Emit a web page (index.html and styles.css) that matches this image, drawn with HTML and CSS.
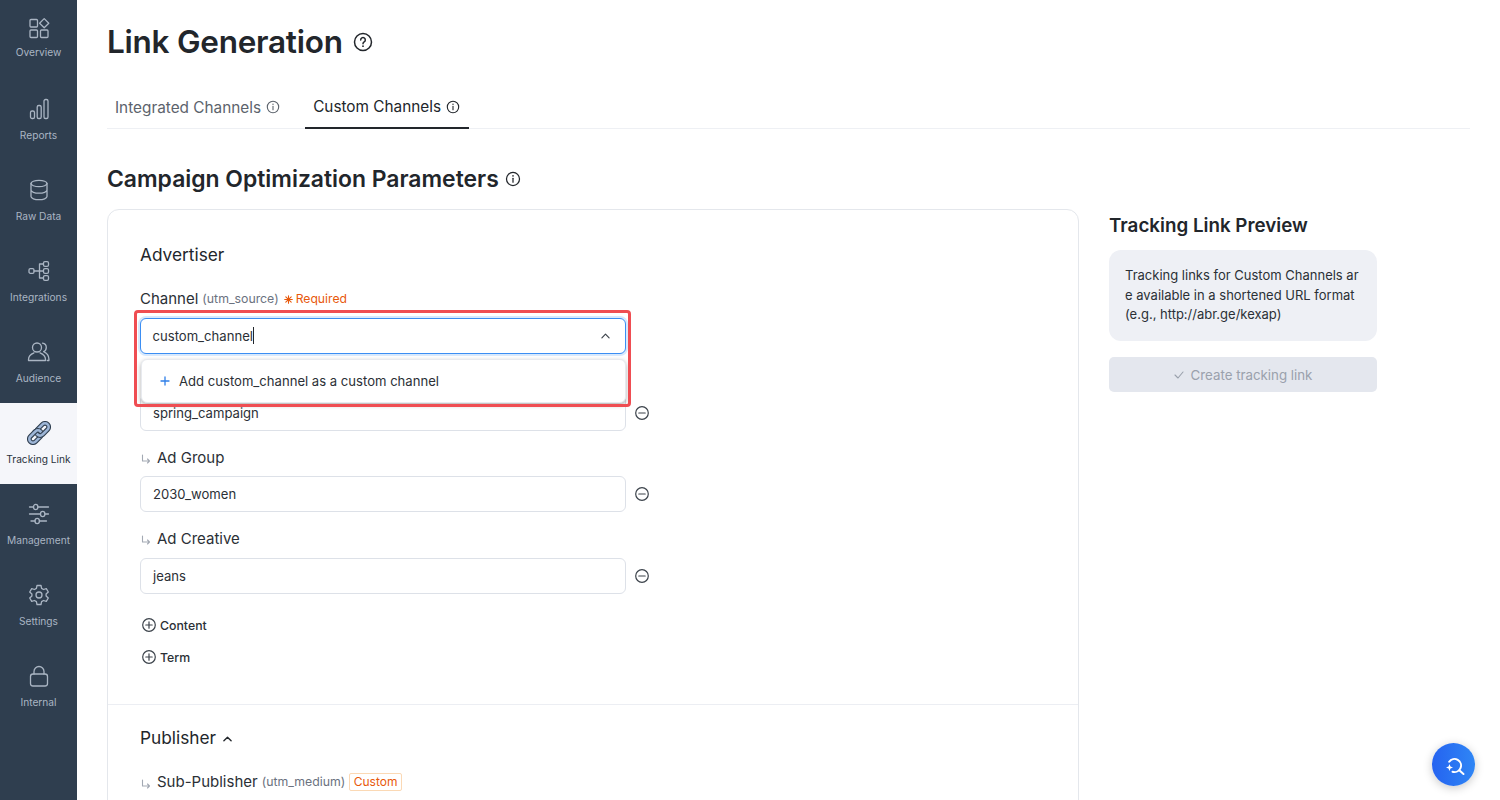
FILE: index.html
```html
<!DOCTYPE html>
<html lang="en">
<head>
<meta charset="utf-8">
<title>Link Generation</title>
<link rel="stylesheet" href="styles.css">
</head>
<body>
<div class="app">
  <nav class="sidebar">
    <a class="nav-item nav-item-first">
      <svg class="nav-icon" viewBox="0 0 24 24"><rect x="3" y="3.500" width="7.500" height="7.500" rx="1"/><rect x="3" y="14" width="7.500" height="7.500" rx="1"/><rect x="13.500" y="14" width="7.500" height="7.500" rx="1"/><path d="M17.200 2.600l4.600 4.600-4.600 4.600-4.600-4.600z"/></svg>
      <span>Overview</span>
    </a>
    <a class="nav-item">
      <svg class="nav-icon" viewBox="0 0 24 24"><rect x="3.500" y="14" width="4" height="7.500" rx="1.600"/><rect x="10.200" y="8.500" width="4" height="13" rx="1.600"/><rect x="17" y="2.500" width="4" height="19" rx="1.600"/></svg>
      <span>Reports</span>
    </a>
    <a class="nav-item">
      <svg class="nav-icon" viewBox="0 0 24 24"><ellipse cx="12" cy="5.500" rx="8" ry="3.200"/><path d="M4 5.500v13c0 1.800 3.600 3.200 8 3.200s8-1.400 8-3.200v-13M4 12c0 1.800 3.600 3.200 8 3.200s8-1.400 8-3.200"/></svg>
      <span>Raw Data</span>
    </a>
    <a class="nav-item">
      <svg class="nav-icon" viewBox="0 0 24 24"><rect x="2" y="9.700" width="5" height="4.600" rx="1.400"/><rect x="16.500" y="2.700" width="5" height="4.600" rx="1.400"/><rect x="16.500" y="9.700" width="5" height="4.600" rx="1.400"/><rect x="16.500" y="16.700" width="5" height="4.600" rx="1.400"/><path d="M7 12h9.500M12.500 5h4M12.500 19h4M12.500 5v14"/></svg>
      <span>Integrations</span>
    </a>
    <a class="nav-item">
      <svg class="nav-icon" viewBox="0 0 24 24"><circle cx="10" cy="7.500" r="4.500"/><path d="M7 12.800c-1.700.7-5.500 2.900-5.500 6.700v1h17v-1c0-3.800-3.800-6-5.500-6.700M15.500 3.200c2.300.4 3.800 2.200 3.800 4.300 0 1.800-1 3.400-2.700 4.100 2.700 1.100 5.300 3.500 5.300 7.500v1.400h-1.600"/></svg>
      <span>Audience</span>
    </a>
    <a class="nav-item nav-item-active">
      <svg class="nav-icon" viewBox="0 0 24 24">
        <defs><clipPath id="link-over"><rect x="8" y="0" width="8" height="12"/></clipPath></defs>
        <g transform="rotate(-45 12 12)">
          <path fill-rule="evenodd" d="M3.500 6.500h7a5.500 5.500 0 0 1 0 11h-7a5.500 5.500 0 0 1 0-11zM3.500 10.200a1.800 1.800 0 0 0 0 3.600h7a1.800 1.800 0 0 0 0-3.600z"/>
          <path fill-rule="evenodd" d="M13.500 6.500h7a5.500 5.500 0 0 1 0 11h-7a5.500 5.500 0 0 1 0-11zM13.500 10.200a1.800 1.800 0 0 0 0 3.600h7a1.800 1.800 0 0 0 0-3.600z"/>
          <path clip-path="url(#link-over)" fill-rule="evenodd" d="M3.500 6.500h7a5.500 5.500 0 0 1 0 11h-7a5.500 5.500 0 0 1 0-11zM3.500 10.200a1.800 1.800 0 0 0 0 3.600h7a1.800 1.800 0 0 0 0-3.600z"/>
        </g>
      </svg>
      <span>Tracking Link</span>
    </a>
    <a class="nav-item">
      <svg class="nav-icon" viewBox="0 0 24 24"><path d="M2.500 5h4M11 5h10.500M2.500 12h11M18 12h3.500M4 19h4M12.500 19h7"/><ellipse cx="8.700" cy="5" rx="2.200" ry="2.600"/><ellipse cx="15.700" cy="12" rx="2.200" ry="2.600"/><ellipse cx="10.200" cy="19" rx="2.200" ry="2.600"/></svg>
      <span>Management</span>
    </a>
    <a class="nav-item">
      <svg class="nav-icon" viewBox="0 0 24 24"><circle cx="12" cy="12" r="3"/><path d="M10 2.500h4l.6 2.900 1.900 1.100 2.800-.9 2 3.400-2.200 2v2l2.200 2-2 3.400-2.800-.9-1.900 1.100-.6 2.900h-4l-.6-2.900-1.900-1.100-2.800.9-2-3.400 2.200-2v-2l-2.200-2 2-3.400 2.800.9 1.900-1.100z"/></svg>
      <span>Settings</span>
    </a>
    <a class="nav-item">
      <svg class="nav-icon" viewBox="0 0 24 24"><rect x="3.500" y="10" width="17" height="12" rx="2.500"/><path d="M7 10V7.500a5 5 0 0 1 10 0V10"/></svg>
      <span>Internal</span>
    </a>
  </nav>

  <main class="main">
    <header class="page-head">
      <h1 class="page-title">Link Generation</h1>
      <svg class="help-icon" viewBox="0 0 20 20"><circle cx="10" cy="10" r="8.500"/><path d="M7.700 7.900a2.300 2.300 0 1 1 3.500 2c-.8.500-1.200.9-1.200 1.800"/><circle class="dot" cx="10" cy="14.200" r=".9"/></svg>
    </header>

    <div class="tabs">
      <div class="tab">Integrated Channels
        <svg class="info-icon" viewBox="0 0 14 14"><circle cx="7" cy="7" r="5.700"/><path d="M7 6.400v3.400"/><circle class="dot" cx="7" cy="4.300" r=".7"/></svg>
      </div>
      <div class="tab tab-active">Custom Channels
        <svg class="info-icon" viewBox="0 0 14 14"><circle cx="7" cy="7" r="5.700"/><path d="M7 6.400v3.400"/><circle class="dot" cx="7" cy="4.300" r=".7"/></svg>
      </div>
    </div>

    <div class="section-head">
      <h2 class="section-title">Campaign Optimization Parameters</h2>
      <svg class="info-icon info-large" viewBox="0 0 14 14"><circle cx="7" cy="7" r="5.700"/><path d="M7 6.400v3.400"/><circle class="dot" cx="7" cy="4.300" r=".7"/></svg>
    </div>

    <div class="columns">
      <section class="card">
        <div class="card-block">
          <h3 class="block-title">Advertiser</h3>

          <div class="field field-first">
            <div class="label">Channel <span class="hint">(utm_source)</span>
              <span class="required"><svg class="req-icon" viewBox="0 0 10 10"><path d="M5 .8v8.400M.8 5h8.400M2 2l6 6M8 2L2 8"/></svg>Required</span>
            </div>
            <div class="select-wrap">
              <div class="input input-focus"><span>custom_channel</span><i class="caret"></i>
                <svg class="chevron" viewBox="0 0 10 6"><path d="M1 5l4-4 4 4"/></svg>
              </div>
              <div class="menu">
                <svg class="plus" viewBox="0 0 10 10"><path d="M5 1v8M1 5h8"/></svg>
                <span>Add custom_channel as a custom channel</span>
              </div>
              <div class="highlight"></div>
            </div>
          </div>

          <div class="field">
            <div class="label"></div>
            <div class="input-row">
              <div class="input">spring_campaign</div>
              <svg class="minus" viewBox="0 0 16 16"><circle cx="8" cy="8" r="6.300"/><path d="M4.800 8h6.400"/></svg>
            </div>
          </div>

          <div class="field field-group">
            <div class="label"><svg class="sub-arrow" viewBox="0 0 10 10"><path d="M1.500 1v6h7M6.500 5l2 2-2 2"/></svg>Ad Group</div>
            <div class="input-row">
              <div class="input">2030_women</div>
              <svg class="minus" viewBox="0 0 16 16"><circle cx="8" cy="8" r="6.300"/><path d="M4.800 8h6.400"/></svg>
            </div>
          </div>

          <div class="field field-creative">
            <div class="label"><svg class="sub-arrow" viewBox="0 0 10 10"><path d="M1.500 1v6h7M6.500 5l2 2-2 2"/></svg>Ad Creative</div>
            <div class="input-row">
              <div class="input">jeans</div>
              <svg class="minus" viewBox="0 0 16 16"><circle cx="8" cy="8" r="6.300"/><path d="M4.800 8h6.400"/></svg>
            </div>
          </div>

          <div class="add-list">
            <div class="add-row"><svg class="add-icon" viewBox="0 0 16 16"><circle cx="8" cy="8" r="6.300"/><path d="M8 4.800v6.400M4.800 8h6.400"/></svg>Content</div>
            <div class="add-row"><svg class="add-icon" viewBox="0 0 16 16"><circle cx="8" cy="8" r="6.300"/><path d="M8 4.800v6.400M4.800 8h6.400"/></svg>Term</div>
          </div>
        </div>

        <div class="card-block card-block-second">
          <h3 class="block-title">Publisher
            <svg class="chevron chevron-dark" viewBox="0 0 10 6"><path d="M1 5l4-4 4 4"/></svg>
          </h3>
          <div class="field field-publisher">
            <div class="label"><svg class="sub-arrow" viewBox="0 0 10 10"><path d="M1.500 1v6h7M6.500 5l2 2-2 2"/></svg>Sub-Publisher <span class="hint">(utm_medium)</span><span class="badge">Custom</span></div>
          </div>
        </div>
      </section>

      <aside class="preview">
        <h3 class="preview-title">Tracking Link Preview</h3>
        <div class="preview-note">Tracking links for Custom Channels are available in a shortened URL format (e.g., http://abr.ge/kexap)</div>
        <div class="create-button">
          <svg class="check" viewBox="0 0 10 8"><path d="M1 4l3 3 5-6"/></svg>
          Create tracking link
        </div>
      </aside>
    </div>
  </main>

  <button class="fab" type="button" aria-label="Search">
    <svg viewBox="0 0 22 22"><path d="M6.200 7.800A6.500 6.500 0 1 1 9.500 17.700"/><path d="M16.300 16.300l4.200 3.700"/><path class="spark" d="M6.500 10l1 2.500 2.500 1-2.500 1-1 2.500-1-2.500-2.500-1 2.500-1z"/></svg>
  </button>
</div>
</body>
</html>
```

FILE: styles.css
```css
* { box-sizing: border-box; }
html, body { margin: 0; height: 100%; overflow: hidden; }
body { font-family: Inter, "Liberation Sans", sans-serif; color: #22262b; background: #fff; }
svg { display: block; flex: none; fill: none; stroke: currentColor; stroke-linecap: round; stroke-linejoin: round; }
svg .dot { fill: currentColor; stroke: none; }
h1, h2, h3 { margin: 0; }

.app { display: flex; height: 800px; overflow: hidden; }

.sidebar { width: 77px; flex: none; background: #2f3e4f; display: flex; flex-direction: column; margin-top: -2px; height: 802px; }
.nav-item { height: 81px; flex: none; display: flex; flex-direction: column; align-items: center; padding-top: 18px; color: #aab5c3; font-size: 10.200px; line-height: 14px; gap: 7px; white-space: nowrap; }
.nav-item-first { gap: 5px; }
.nav-icon { width: 24px; height: 24px; stroke-width: 1.300; }
.nav-item-active { background: #f5f6fa; color: #2a323c; }
.nav-item-active .nav-icon { color: #2f3e4f; fill: #9db5d6; stroke-width: 1.100; }

.main { flex: 1; min-width: 0; padding: 22px 30px 0; }
.page-head { display: flex; align-items: center; gap: 10px; height: 40px; }
.page-title { font-size: 31.500px; line-height: 40px; font-weight: 600; letter-spacing: -.25px; color: #22262b; }
.help-icon { width: 20px; height: 20px; stroke-width: 1.500; color: #22262b; }

.tabs { display: flex; gap: 17px; margin-top: 26px; border-bottom: 1.500px solid #eef0f4; height: 41px; }
.tab { height: 41px; padding: 0 8px; display: flex; align-items: center; gap: 5px; font-size: 15.350px; color: #5c636c; padding-bottom: 3px; }
.tab-active { color: #22262b; border-bottom: 2px solid #22262b; padding: 0 9px 2px 8px; }
.info-icon { width: 14px; height: 14px; stroke-width: 1.100; }
.info-large { width: 16px; height: 16px; }

.section-head { display: flex; align-items: center; gap: 6px; margin-top: 34px; height: 32px; }
.section-title { font-size: 22.900px; line-height: 32px; font-weight: 600; color: #22262b; }

.columns { display: flex; gap: 30px; margin-top: 14px; align-items: flex-start; }
.card { width: 972px; flex: none; border: 1px solid #e4e7ec; border-radius: 12px; }
.card-block { padding: 32px 32px 35px; }
.card-block-second { border-top: 1px solid #eceef3; padding-top: 20px; }
.block-title { font-size: 17.300px; line-height: 24px; height: 24px; font-weight: 400; color: #22262b; display: flex; align-items: center; gap: 7px; padding-top: 2px; }

.field { margin-top: 13px; }
.field-first { margin-top: 20px; margin-bottom: -4px; }
.field-group { margin-top: 14px; }
.field-group .input-row { margin-top: 7px; }
.field-creative { margin-top: 14px; }
.field-publisher { margin-top: 20px; }
.label { display: flex; align-items: center; font-size: 15px; line-height: 24px; height: 24px; padding-top: 2px; color: #2b3036; gap: 4px; white-space: nowrap; }
.hint { font-size: 12.300px; color: #6b7280; }
.required { display: flex; align-items: center; gap: 3px; font-size: 12.200px; color: #e8590c; margin-left: 1px; }
.req-icon { width: 9px; height: 9px; stroke-width: 1.200; }
.sub-arrow { width: 10px; height: 10px; margin: 3px 2px 0 1px; color: #a3a9b3; stroke-width: 1.100; }

.select-wrap { position: relative; width: 486px; margin-top: 8px; }
.input-row { display: flex; align-items: center; gap: 8px; margin-top: 8px; }
.input { width: 486px; height: 36px; border: 1px solid #dde1e8; border-radius: 6px; padding: 0 12px; font-size: 13.100px; color: #2b3036; display: flex; align-items: center; background: #fff; }
.input-focus { height: 35.500px; border: 1.500px solid #3b8ef3; box-shadow: 0 0 0 2px #d8e9fd; padding: 0 11.500px; }
.caret { width: 1px; height: 17px; background: #22262b; }
.chevron { width: 9px; height: 6px; stroke-width: 1.300; margin-left: auto; margin-right: 4px; color: #3c434b; }
.chevron-dark { margin: 2px 0 0 0; color: #22262b; stroke-width: 1.500; }
.menu { position: absolute; z-index: 2; top: 41px; left: 1px; right: 0; height: 44px; background: #fff; border: 1px solid #e8eaef; border-radius: 6px; box-shadow: 0 2px 5px rgba(0,0,0,.32); display: flex; align-items: center; gap: 9px; padding-left: 18px; font-size: 13.100px; color: #2b3036; }
.plus { width: 10px; height: 10px; color: #2f7fe8; stroke-width: 1.300; }
.highlight { position: absolute; z-index: 3; top: -8px; left: -6px; right: -5px; height: 97px; border: 3px solid #ef4d52; border-radius: 4px; pointer-events: none; }
.minus, .add-icon { width: 16px; height: 16px; color: #3c434b; stroke-width: 1.200; }

.add-list { display: flex; flex-direction: column; gap: 8px; margin-top: 19.500px; }
.add-row { display: flex; align-items: center; gap: 3px; height: 24px; font-size: 12.300px; font-weight: 500; color: #2b3036; margin-left: 1px; }

.badge { margin-left: 0; padding: 0 3.500px; height: 18px; line-height: 16px; border: 1px solid #fbd9b5; border-radius: 2px; font-size: 12px; color: #e8590c; }

.preview { width: 268px; flex: none; }
.preview-title { font-size: 18.800px; line-height: 32px; font-weight: 600; color: #22262b; padding-top: 1px; }
.preview-note { margin-top: 8px; padding: 16px; height: 91px; background: #eef0f5; border-radius: 12px; font-size: 13px; line-height: 19.500px; color: #2b3036; word-break: break-all; }
.create-button { margin-top: 16px; height: 35px; background: #e4e7ee; border-radius: 5px; display: flex; align-items: center; justify-content: center; gap: 7px; font-size: 13.300px; color: #9aa1ac; }
.check { width: 10px; height: 8px; stroke-width: 1.100; }

.fab { position: absolute; left: 1432px; top: 743px; width: 43px; height: 43px; border: 0; border-radius: 50%; background: linear-gradient(90deg, #2563f0, #2f86f5); box-shadow: 0 2px 10px rgba(0,0,0,.22); display: flex; align-items: center; justify-content: center; padding: 0; color: #fff; }
.fab svg { width: 22px; height: 22px; stroke-width: 2; }
.fab .spark { fill: #fff; stroke: none; }
```
